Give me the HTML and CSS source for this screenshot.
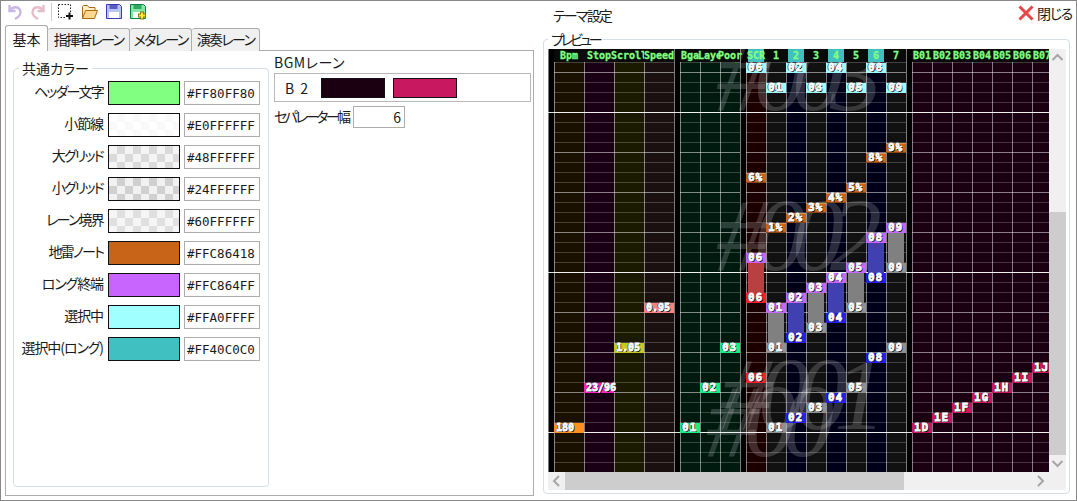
FILE: index.html
```html
<!DOCTYPE html>
<html lang="ja">
<head>
  <meta charset="UTF-8" />
  <title>テーマ設定</title>
  <link rel="stylesheet" href="styles.css">
</head>
<body>
<div class="window">
  <div class="left">
    <div class="toolbar">
      <svg class="tool undo" viewBox="0 0 16 18"><path d="M2.5 2v6h6M2.5 8C5 3.500 11 3 13 7c1.500 3.500-1 7-5 9" fill="none" stroke="#c9b8e4" stroke-width="2.400"/></svg>
      <svg class="tool redo" viewBox="0 0 16 18"><path d="M13.500 2v6h-6M13.500 8C11 3.500 5 3 3 7c-1.500 3.500 1 7 5 9" fill="none" stroke="#e6bccb" stroke-width="2.400"/></svg>
      <span class="tool-sep"></span>
      <svg class="tool" viewBox="0 0 16 18"><path d="M.5 1.500h12v8M.5 1.500v13h7" fill="none" stroke="#222" stroke-dasharray="1.500 1.500"/><path d="M11.500 9.500v7M8 13h7" stroke="#111" stroke-width="2" fill="none"/></svg>
      <svg class="tool" viewBox="0 0 16 18"><path d="M.5 15.500V3.500l1-1h4l1.500 2h6v3" fill="#fff0c8" stroke="#a86a10"/><path d="M.5 15.500l3-8h12l-3 8z" fill="#ffd890" stroke="#a86a10"/></svg>
      <svg class="tool" viewBox="0 0 16 18"><path d="M.5 1.500h13l2 2v12H.5z" fill="#b8c4f4" stroke="#3a3ab4"/><path d="M3.500 2h8v4h-8z" fill="#5a5ac8"/><path d="M3 9h10v6H3z" fill="#fff"/></svg>
      <svg class="tool" viewBox="0 0 16 18"><path d="M.5 1.500h13l2 2v12H.5z" fill="#84e8a4" stroke="#0c8040"/><path d="M3.500 2h8v4h-8z" fill="#30a860"/><path d="M3 9h7v6H3z" fill="#fff"/><path d="M12 8.500v8M8 12.500h8" stroke="#8a7a00" stroke-width="4"/><path d="M12 9.500v6M9 12.500h6" stroke="#ffe830" stroke-width="2"/></svg>
    </div>
    <div class="tabs">
      <div class="tab tab-on">基本</div>
      <div class="tab tab-w82">指揮者レーン</div>
      <div class="tab tab-w62">メタレーン</div>
      <div class="tab tab-w68">演奏レーン</div>
    </div>
    <div class="pane">
      <fieldset class="group colors">
        <legend>共通カラー</legend>
        <div class="row"><span class="row-label">ヘッダー文字</span><span class="swatch c-header"></span><span class="hex">#FF80FF80</span></div>
        <div class="row"><span class="row-label kanji">小節線</span><span class="swatch c-measure"></span><span class="hex">#E0FFFFFF</span></div>
        <div class="row"><span class="row-label">大グリッド</span><span class="swatch c-big"></span><span class="hex">#48FFFFFF</span></div>
        <div class="row"><span class="row-label">小グリッド</span><span class="swatch c-small"></span><span class="hex">#24FFFFFF</span></div>
        <div class="row"><span class="row-label">レーン境界</span><span class="swatch c-border"></span><span class="hex">#60FFFFFF</span></div>
        <div class="row"><span class="row-label">地雷ノート</span><span class="swatch c-mine"></span><span class="hex">#FFC86418</span></div>
        <div class="row"><span class="row-label kanji">ロング終端</span><span class="swatch c-end"></span><span class="hex">#FFC864FF</span></div>
        <div class="row"><span class="row-label kanji">選択中</span><span class="swatch c-sel"></span><span class="hex">#FFA0FFFF</span></div>
        <div class="row"><span class="row-label kanji">選択中(ロング)</span><span class="swatch c-sellong"></span><span class="hex">#FF40C0C0</span></div>
      </fieldset>
      <div class="side">
        <div class="side-title">BGMレーン</div>
        <div class="bgm">
          <span class="bgm-name">B 2</span>
          <span class="swatch-sm c-bgm1"></span>
          <span class="swatch-sm c-bgm2"></span>
        </div>
        <div class="sep-row">
          <span>セパレーター幅</span>
          <span class="num">6</span>
        </div>
      </div>
    </div>
  </div>

  <div class="right">
    <div class="titlebar">
      <span class="title">テーマ設定</span>
      <span class="close">
        <svg class="close-x" viewBox="0 0 16 16"><path d="M1.500 1.500l13 13M14.500 1.500l-13 13" stroke="#e84646" stroke-width="3" fill="none"/></svg>
        閉じる
      </span>
    </div>
    <fieldset class="group preview">
      <legend>プレビュー</legend>
      <div class="scroller">
        <div class="chart">
          <div class="ghost ghost-top">#003</div>
          <div class="ghost ghost-mid">#002</div>
          <div class="ghost ghost-low">#001</div>
          <div class="ghost ghost-lower">#00</div>

          <div class="lane gap"></div>
          <div class="lane w30 l-bpm"><div class="head">Bpm</div>
            <div class="note wide n-bpm" style="top:374px">180</div>
          </div>
          <div class="lane w30 l-stop"><div class="head">Stop</div>
            <div class="note wide n-stop" style="top:334px">23/96</div>
          </div>
          <div class="lane w30 l-scroll"><div class="head">Scroll</div>
            <div class="note wide n-scroll" style="top:294px">1.05</div>
          </div>
          <div class="lane w30 l-speed"><div class="head">Speed</div>
            <div class="note wide n-speed" style="top:254px">0.95</div>
          </div>
          <div class="lane gap"></div>
          <div class="lane w20 l-bg"><div class="head">Bga</div>
            <div class="note n-bg" style="top:374px">01</div>
          </div>
          <div class="lane w20 l-bg"><div class="head">Laye</div>
            <div class="note n-bg" style="top:334px">02</div>
          </div>
          <div class="lane w20 l-bg"><div class="head">Poor</div>
            <div class="note n-bg" style="top:294px">03</div>
          </div>
          <div class="lane gap"></div>

          <div class="lane w20 l-scr"><div class="head active">SCR</div>
            <div class="note n-sel" style="top:14px">06</div>
            <div class="note n-mine" style="top:124px">6%</div>
            <div class="note n-end" style="top:204px">06</div>
            <div class="hold h-red" style="top:214px"></div>
            <div class="note n-red" style="top:244px">06</div>
            <div class="note n-red" style="top:324px">06</div>
          </div>
          <div class="lane w20 l-odd"><div class="head">1</div>
            <div class="note n-sel" style="top:34px">01</div>
            <div class="note n-mine" style="top:174px">1%</div>
            <div class="note n-end" style="top:254px">01</div>
            <div class="hold h-gray" style="top:264px"></div>
            <div class="note n-gray" style="top:294px">01</div>
            <div class="note n-gray" style="top:374px">01</div>
          </div>
          <div class="lane w20 l-even"><div class="head active">2</div>
            <div class="note n-sel" style="top:14px">02</div>
            <div class="note n-mine" style="top:164px">2%</div>
            <div class="note n-end" style="top:244px">02</div>
            <div class="hold h-blue" style="top:254px"></div>
            <div class="note n-blue" style="top:284px">02</div>
            <div class="note n-blue" style="top:364px">02</div>
          </div>
          <div class="lane w20 l-odd"><div class="head">3</div>
            <div class="note n-sel" style="top:34px">03</div>
            <div class="note n-mine" style="top:154px">3%</div>
            <div class="note n-end" style="top:234px">03</div>
            <div class="hold h-gray" style="top:244px"></div>
            <div class="note n-gray" style="top:274px">03</div>
            <div class="note n-gray" style="top:354px">03</div>
          </div>
          <div class="lane w20 l-even"><div class="head active">4</div>
            <div class="note n-sel" style="top:14px">04</div>
            <div class="note n-mine" style="top:144px">4%</div>
            <div class="note n-end" style="top:224px">04</div>
            <div class="hold h-blue" style="top:234px"></div>
            <div class="note n-blue" style="top:264px">04</div>
            <div class="note n-blue" style="top:344px">04</div>
          </div>
          <div class="lane w20 l-odd"><div class="head">5</div>
            <div class="note n-sel" style="top:34px">05</div>
            <div class="note n-mine" style="top:134px">5%</div>
            <div class="note n-end" style="top:214px">05</div>
            <div class="hold h-gray" style="top:224px"></div>
            <div class="note n-gray" style="top:254px">05</div>
            <div class="note n-gray" style="top:334px">05</div>
          </div>
          <div class="lane w20 l-even"><div class="head active">6</div>
            <div class="note n-sel" style="top:14px">08</div>
            <div class="note n-mine" style="top:104px">8%</div>
            <div class="note n-end" style="top:184px">08</div>
            <div class="hold h-blue" style="top:194px"></div>
            <div class="note n-blue" style="top:224px">08</div>
            <div class="note n-blue" style="top:304px">08</div>
          </div>
          <div class="lane w20 l-odd"><div class="head">7</div>
            <div class="note n-sel" style="top:34px">09</div>
            <div class="note n-mine" style="top:94px">9%</div>
            <div class="note n-end" style="top:174px">09</div>
            <div class="hold h-gray" style="top:184px"></div>
            <div class="note n-gray" style="top:214px">09</div>
            <div class="note n-gray" style="top:294px">09</div>
          </div>
          <div class="lane gap"></div>

          <div class="lane w20 l-b"><div class="head">B01</div><div class="note n-b" style="top:374px">1D</div></div>
          <div class="lane w20 l-b"><div class="head">B02</div><div class="note n-b" style="top:364px">1E</div></div>
          <div class="lane w20 l-b"><div class="head">B03</div><div class="note n-b" style="top:354px">1F</div></div>
          <div class="lane w20 l-b"><div class="head">B04</div><div class="note n-b" style="top:344px">1G</div></div>
          <div class="lane w20 l-b"><div class="head">B05</div><div class="note n-b" style="top:334px">1H</div></div>
          <div class="lane w20 l-b"><div class="head">B06</div><div class="note n-b" style="top:324px">1I</div></div>
          <div class="lane w20 l-b"><div class="head">B07</div><div class="note n-b" style="top:314px">1J</div></div>
        </div>
        <div class="vbar">
          <svg class="chev" viewBox="0 0 17 17"><path d="M3.500 11l5-5 5 5" fill="none" stroke="#a6a6a6" stroke-width="2"/></svg>
          <div class="vthumb"></div>
          <svg class="chev" viewBox="0 0 17 17"><path d="M3.500 6l5 5 5-5" fill="none" stroke="#a6a6a6" stroke-width="2"/></svg>
        </div>
        <div class="hbar">
          <svg class="chev" viewBox="0 0 17 17"><path d="M11 3.500l-5 5 5 5" fill="none" stroke="#a6a6a6" stroke-width="2"/></svg>
          <div class="hthumb"></div>
          <svg class="chev" viewBox="0 0 17 17"><path d="M6 3.500l5 5-5 5" fill="none" stroke="#a6a6a6" stroke-width="2"/></svg>
        </div>
        <div class="corner"></div>
      </div>
    </fieldset>
  </div>
</div>
</body>
</html>
```

FILE: styles.css
```css
* {
  box-sizing: border-box;
}
body {
  margin: 0;
  background: white;
  color: #1a1a1a;
  font-family: "Noto Sans CJK JP", "Noto Sans", sans-serif;
  font-size: 14px;
  font-feature-settings: "palt";
}
.window {
  width: 1077px;
  height: 501px;
  border: 1px solid #888;
  display: flex;
  overflow: hidden;
}

/* left side */
.left {
  width: 538px;
  padding-left: 4px;
  flex-shrink: 0;
}
.toolbar {
  height: 24px;
  display: flex;
  align-items: center;
  padding: 0 0 2px 2px;
}
.tool {
  width: 16px;
  height: 18px;
  margin-right: 8px;
}
.undo { margin-right: 7px; }
.redo { margin-right: 5px; }
.tool-sep {
  width: 1px;
  height: 18px;
  background: #ccc;
  margin-right: 6px;
}
.tabs {
  display: flex;
  height: 26px;
  align-items: flex-end;
  position: relative;
  margin-bottom: -1px;
}
.tab {
  height: 23px;
  line-height: 21px;
  text-align: center;
  white-space: nowrap;
  letter-spacing: -1.7px;
  background: #f0f0f0;
  border: 1px solid #acacac;
  border-bottom: none;
  border-left: none;
  border-radius: 3px 3px 0 0;
}
.tab-on {
  width: 43px;
  height: 26px;
  line-height: 26px;
  letter-spacing: 0;
  background: white;
  border-left: 1px solid #acacac;
  position: relative;
  z-index: 1;
}
.tab-w82 { width: 82px; }
.tab-w62 { width: 62px; }
.tab-w68 { width: 68px; }
.pane {
  width: 529px;
  height: 446px;
  border: 1px solid #acacac;
  padding: 0 0 0 7px;
  display: flex;
  gap: 5px;
}
.group {
  margin: 0;
  min-width: 0;
  border: 1px solid #d5dfe5;
  border-radius: 4px;
}
.group legend {
  padding: 0 3px;
  margin-left: 5px;
  line-height: 18px;
}
.colors {
  width: 256px;
  height: 428px;
  margin-top: 8px;
  padding: 4px 0 0;
  display: flex;
  flex-direction: column;
  gap: 8px;
}
.row {
  display: flex;
  align-items: center;
  height: 24px;
}
.row-label {
  width: 89px;
  margin-right: 5px;
  text-align: right;
  white-space: nowrap;
  padding-bottom: 4px;
  letter-spacing: -1.8px;
}
.row-label.kanji {
  letter-spacing: -1.1px;
}
.swatch {
  width: 72px;
  height: 24px;
  border: 1px solid #111;
  margin-right: 4px;
}
.hex {
  width: 76px;
  height: 24px;
  border: 1px solid #adadad;
  font-family: "DejaVu Sans Mono", monospace;
  font-size: 12.5px;
  line-height: 24px;
  padding-left: 2px;
  white-space: nowrap;
  overflow: hidden;
}
.c-header { background: #80ff80; }
.c-measure {
  background: repeating-conic-gradient(#f9f9f9 0 25%, #fefefe 0 50%) 0 0 / 16px 16px;
}
.c-big {
  background: repeating-conic-gradient(#dadada 0 25%, #f4f4f4 0 50%) 0 0 / 16px 16px;
}
.c-small {
  background: repeating-conic-gradient(#d0d0d0 0 25%, #f1f1f1 0 50%) 0 0 / 16px 16px;
}
.c-border {
  background: repeating-conic-gradient(#e0e0e0 0 25%, #f5f5f5 0 50%) 0 0 / 16px 16px;
}
.c-mine { background: #c86418; }
.c-end { background: #c864ff; }
.c-sel { background: #a0ffff; }
.c-sellong { background: #40c0c0; }

.side {
  width: 257px;
}
.side-title {
  line-height: 18px;
  margin-top: 2px;
  height: 20px;
  letter-spacing: 0.5px;
}
.bgm {
  height: 29px;
  border: 1px solid #b8b8b8;
  display: flex;
  align-items: center;
}
.bgm-name {
  width: 46px;
  padding-left: 10px;
  word-spacing: 3px;
}
.swatch-sm {
  width: 64px;
  height: 20px;
  border: 1px solid #111;
  margin-right: 8px;
}
.c-bgm1 { background: #1a0010; }
.c-bgm2 { background: #c81860; }
.sep-row {
  display: flex;
  align-items: center;
  margin-top: 4px;
  height: 22px;
}
.sep-row span:first-child {
  width: 79px;
  white-space: nowrap;
  padding-bottom: 2px;
  letter-spacing: -2.6px;
}
.num {
  width: 52px;
  height: 22px;
  line-height: 20px;
  border: 1px solid #adadad;
  text-align: right;
  padding-right: 3px;
}

/* right side */
.right {
  width: 531px;
  margin-left: 4px;
  flex-shrink: 0;
}
.titlebar {
  height: 30px;
  display: flex;
  justify-content: space-between;
  align-items: flex-start;
  padding: 0 2px 0 10px;
  line-height: 20px;
}
.title {
  margin-top: 4px;
  letter-spacing: -1.8px;
}
.close {
  display: flex;
  align-items: center;
  gap: 3px;
  margin-top: 2px;
  letter-spacing: -1.3px;
}
.close-x {
  width: 16px;
  height: 16px;
}
.preview {
  width: 527px;
  height: 464px;
  margin-top: -1px;
  padding: 1px 3px 3px 4px;
}
.preview legend {
  margin-left: 0;
  letter-spacing: -3px;
}
.scroller {
  display: grid;
  grid-template-columns: 501px 17px;
  grid-template-rows: 423px 18px;
}

/* chart lanes */
.chart {
  position: relative;
  display: flex;
  overflow: hidden;
  background: black;
}
.lane {
  position: relative;
  flex-shrink: 0;
  height: 423px;
  border-left: 1px solid rgba(255,255,255,0.48);
  background-image:
    linear-gradient(rgba(255,255,255,0.88) 1px, transparent 1px),
    linear-gradient(rgba(255,255,255,0.36) 1px, transparent 1px),
    linear-gradient(rgba(255,255,255,0.2) 1px, transparent 1px);
  background-size: 100% 160px, 100% 40px, 100% 10px;
  background-position: 0 63px, 0 23px, 0 3px;
}
.gap {
  width: 6px;
  background-color: black;
  background-image: linear-gradient(rgba(255,255,255,0.88) 1px, transparent 1px);
  background-size: 100% 160px;
  background-position: 0 63px;
}
.w30 { width: 30px; }
.w20 { width: 20px; }
.l-bpm { background-color: #1a1000; }
.l-stop { background-color: #1a0014; }
.l-scroll { background-color: #1a1a00; }
.l-speed { background-color: #1a1010; }
.l-bg { background-color: #001a10; }
.l-scr { background-color: #1c0000; }
.l-odd { background-color: #111111; }
.l-even { background-color: #000018; }
.l-b { background-color: #1a0010; }
.head {
  position: relative;
  z-index: 3;
  height: 13px;
  margin-left: -1px;
  display: flex;
  justify-content: center;
  background: #0a0a0a;
  color: #80ff80;
  font: bold 10px/13px "DejaVu Sans Mono", monospace;
  -webkit-text-stroke: 0.3px #80ff80;
  white-space: nowrap;
}
.head.active {
  background: linear-gradient(to right, #0a0a0a 2px, #40c0c0 2px, #40c0c0 18px, #0a0a0a 18px);
}
.ghost {
  position: absolute;
  z-index: 1;
  font-family: "Liberation Serif", serif;
  font-style: italic;
  font-size: 104px;
  line-height: 104px;
  letter-spacing: -14px;
  color: rgba(255,255,255,0.17);
  white-space: nowrap;
}
.ghost-top { left: 168px; top: -26px; }
.ghost-mid { left: 168px; top: 134px; }
.ghost-low { left: 172px; top: 293px; }
.ghost-lower { left: 158px; top: 320px; }

.note {
  position: absolute;
  z-index: 2;
  left: -1px;
  right: 0;
  height: 10px;
  padding-left: 2px;
  color: white;
  font: bold 11px/10px "DejaVu Sans Mono", monospace;
  letter-spacing: 1px;
  white-space: nowrap;
  -webkit-text-stroke: 0.8px white;
  text-shadow: 1px 1px #000, -1px 0 #000;
}
.note.wide {
  font-size: 10px;
  letter-spacing: 0;
}
.n-sel { background: #a0ffff; }
.n-mine { background: #c86418; box-shadow: inset 0 1px #e09050, inset 0 -1px #8a4410; }
.n-end { background: #c864ff; }
.n-red { background: #ff2020; }
.n-gray { background: #909090; }
.n-blue { background: #2020f0; }
.n-bg { background: #18f080; }
.n-b { background: #c81860; }
.n-bpm { background: #ff9020; }
.n-stop { background: #ff20c0; }
.n-scroll { background: #c8c820; }
.n-speed { background: #ff8080; }
.hold {
  position: absolute;
  z-index: 2;
  left: 1px;
  right: 2px;
  height: 30px;
}
.h-red { background: #b84040; }
.h-gray { background: #808080; }
.h-blue { background: #4040b0; }

/* scrollbars */
.vbar, .hbar {
  background: #f0f0f0;
  display: flex;
  justify-content: space-between;
}
.vbar {
  flex-direction: column;
}
.vthumb {
  width: 17px;
  height: 244px;
  margin-top: 146px;
  background: #cdcdcd;
}
.hthumb {
  width: 339px;
  height: 18px;
  background: #cdcdcd;
  margin-right: auto;
}
.chev {
  width: 17px;
  height: 17px;
  flex-shrink: 0;
}
.hbar .chev {
  height: 18px;
}
.corner {
  background: #f0f0f0;
}
```
